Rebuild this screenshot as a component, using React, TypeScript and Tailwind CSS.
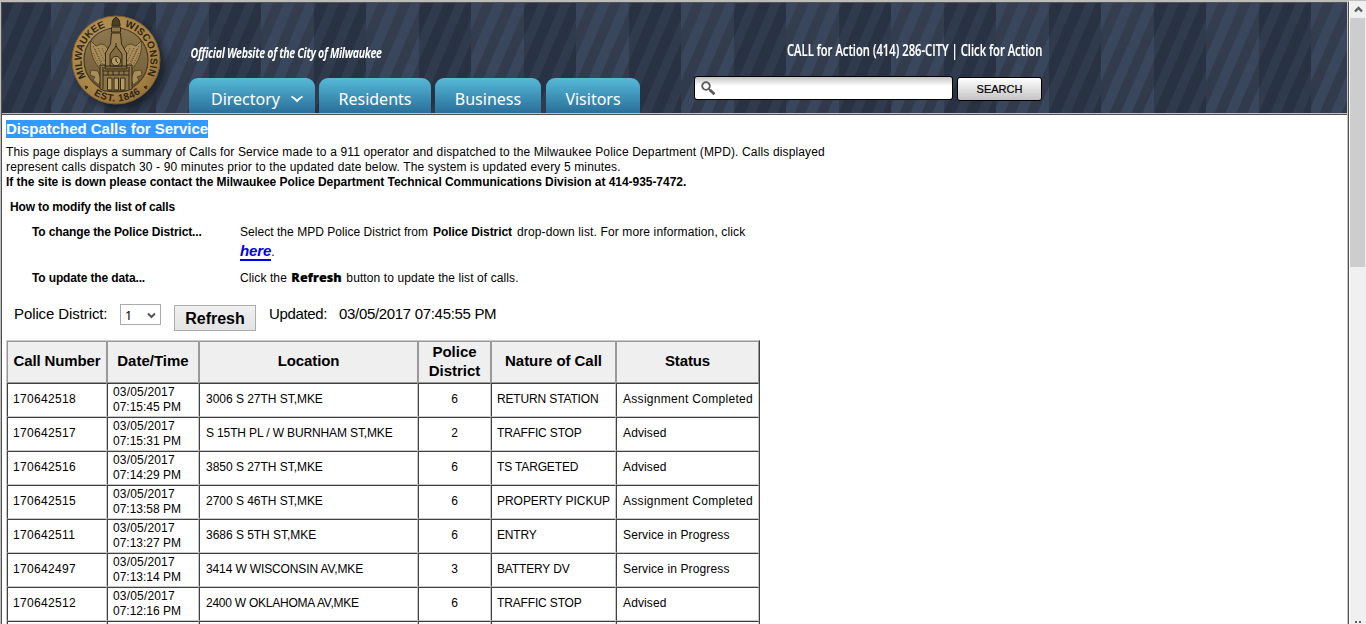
import React from "react";

const calls = [
  ["170642518", "07:15:45 PM", "3006 S 27TH ST,MKE", "6", "RETURN STATION", "Assignment Completed"],
  ["170642517", "07:15:31 PM", "S 15TH PL / W BURNHAM ST,MKE", "2", "TRAFFIC STOP", "Advised"],
  ["170642516", "07:14:29 PM", "3850 S 27TH ST,MKE", "6", "TS TARGETED", "Advised"],
  ["170642515", "07:13:58 PM", "2700 S 46TH ST,MKE", "6", "PROPERTY PICKUP", "Assignment Completed"],
  ["170642511", "07:13:27 PM", "3686 S 5TH ST,MKE", "6", "ENTRY", "Service in Progress"],
  ["170642497", "07:13:14 PM", "3414 W WISCONSIN AV,MKE", "3", "BATTERY DV", "Service in Progress"],
  ["170642512", "07:12:16 PM", "2400 W OKLAHOMA AV,MKE", "6", "TRAFFIC STOP", "Advised"],
];

function Stripes() {
  return (
    <svg className="absolute inset-0 h-full w-full" aria-hidden="true">
      <defs>
        <linearGradient id="shade" x1="0" y1="0" x2="0" y2="1">
          <stop offset="0" stopColor="#343e4e" />
          <stop offset="1" stopColor="#303a4b" />
        </linearGradient>
        <pattern id="bands" x="49" y="0" width="105" height="110" patternUnits="userSpaceOnUse">
          <rect width="105" height="110" fill="url(#shade)" />
          {[1, 23, 45, 67, 89].map((x) => (
            <path key={x} d={`M${x} 0h11l-47.5 110h-11z`} fill="#3a465b" />
          ))}
          <rect x="53" width="52" height="110" fill="#293242" />
          <svg x="53" width="52" height="110" overflow="hidden">
            {[-7, 15, 37, 59, 81].map((x) => (
              <path key={x} d={`M${x} 0h10l-47.5 110h-10z`} fill="#303b4e" />
            ))}
          </svg>
        </pattern>
      </defs>
      <rect width="100%" height="100%" fill="url(#bands)" />
    </svg>
  );
}

function Seal() {
  return (
    <svg width="104" height="100" viewBox="0 0 104 100" className="block overflow-visible">
      <defs>
        <radialGradient id="gold" cx="0.4" cy="0.35" r="0.75">
          <stop offset="0" stopColor="#b79659" />
          <stop offset="0.7" stopColor="#a88345" />
          <stop offset="1" stopColor="#8c6933" />
        </radialGradient>
        <linearGradient id="field" x1="0" y1="0" x2="0" y2="1">
          <stop offset="0" stopColor="#8d774f" />
          <stop offset="1" stopColor="#6f5b36" />
        </linearGradient>
        <filter id="soft" x="-20%" y="-20%" width="150%" height="150%">
          <feGaussianBlur stdDeviation="3" />
        </filter>
        <path id="ringTop" d="M22.4 67.8A34.5 34.5 0 1 1 81.6 67.8" />
        <path id="ringBottom" d="M12.7 62.8A41.3 41.3 0 0 0 91.300 62.8" />
      </defs>
      <circle cx="57" cy="55" r="44" fill="#161c28" opacity="0.8" filter="url(#soft)" />
      <circle cx="52" cy="50" r="44" fill="url(#gold)" stroke="#7c6135" strokeWidth="1" />
      <circle cx="52" cy="50" r="32" fill="url(#field)" stroke="#4a3c25" strokeWidth="1.2" />
      <g fontFamily="Liberation Sans, sans-serif" fontWeight="bold" fill="#2c2618" fontSize="10">
        <text>
          <textPath href="#ringTop" startOffset="1" textLength="61">MILWAUKEE</textPath>
        </text>
        <text>
          <textPath href="#ringTop" startOffset="81" textLength="61">WISCONSIN</textPath>
        </text>
        <text>
          <textPath href="#ringBottom" startOffset="28" textLength="50">EST. 1846</textPath>
        </text>
      </g>
      <g fill="#a98d59" stroke="#493a22" strokeWidth="0.8">
        <path d="M27 31l5 5 5-2 4 1 3 4v16l-6 6c-8-8-13-19-11-30z" />
        <path d="M77 31l-5 5-5-2-4 1-3 4v16l6 6c8-8 13-19 11-30z" />
        <path d="M27 60l7 1 3 8-2 6-6-5 2-3-5-2z" />
        <path d="M77 60l-7 1-3 8 2 6 6-5-2-3 5-2z" />
      </g>
      <g stroke="#5f4b2b" strokeWidth="0.9" strokeDasharray="1.4 1.2" fill="none">
        <path d="M29 36l9 20M31 39l8 16M29 43l7 14M34 38l7 14M38 38l4 10M75 36l-9 20M73 39l-8 16M75 43l-7 14M70 38l-7 14M66 38l-4 10" />
      </g>
      <g stroke="#30281a" strokeWidth="1">
        <path d="M48 14q0-5 4-7q4 2 4 7v2h-8z" fill="#4b3e27" />
        <path d="M47.500 17h9v5h-9z" fill="#8f7646" />
        <path d="M47.500 23h9l1 11 5 9v13h-21V43l5-9z" fill="#9a804f" />
        <path d="M46 56V44l6-8 6 8v12z" fill="#836b40" />
        <circle cx="52" cy="51" r="4.700" fill="#b59a62" />
        <path d="M52 48v3l2 2" fill="none" />
        <path d="M36 55h5v4h22v-4h5v24l-6 2H41l-5-2z" fill="#8e7546" />
        <path d="M39 61h26M39 65h26M44 61v4M49 61v4M55 61v4M60 61v4" fill="none" />
        <path d="M43.500 68h4.500v12h-4.500zM50 68h4.500v12H50zM56.500 68h4.500v12h-4.500z" fill="#b89b60" />
        <path d="M39 57v22M65 57v22M52 36v-3" fill="none" />
      </g>
      <path d="M21 76l3 1-2 2zM83 76l-3 1 2 2z" fill="#3b301e" stroke="#3b301e" />
    </svg>
  );
}

function Tab({ className, children }: { className: string; children: React.ReactNode }) {
  return (
    <a className={"flex h-[35px] items-center justify-center rounded-t-[9px] bg-linear-to-b from-[#56bad8] to-[#2a6f9a] pt-[7px] font-['Noto_Sans',sans-serif] text-[16px] text-white " + className}>
      {children}
    </a>
  );
}

function Header() {
  return (
    <header className="relative h-[112px] border-t border-b border-t-[#555] border-b-[#bfc0c6]">
      <Stripes />
      <div className="relative flex h-[110px]">
        <div className="w-[187px] pt-[7px] pl-[62px]">
          <Seal />
        </div>
        <div className="flex w-[505px] flex-col justify-between pt-[38px]">
          <div className="h-[20px] w-[193px] whitespace-nowrap">
            <span className="inline-block origin-left scale-x-[0.755] pl-[2px] font-['Open_Sans',sans-serif] text-[14px] leading-[20px] font-bold tracking-[-0.4px] text-white italic">
              Official Website of the City of Milwaukee
            </span>
          </div>
          <nav className="flex">
            <Tab className="mr-[4px] w-[126px] gap-[10px] pl-[11px]">
              Directory
              <svg width="14" height="8" viewBox="0 0 14 8">
                <path d="M1.500 1.500Q5 3.500 7 6Q9 3.500 12.500 1.500" fill="none" stroke="#fff" strokeWidth="2" />
              </svg>
            </Tab>
            <Tab className="mr-[4px] w-[112px]">Residents</Tab>
            <Tab className="mr-[5px] w-[106px]">Business</Tab>
            <Tab className="w-[94px]">Visitors</Tab>
          </nav>
        </div>
        <div className="w-[348px] pt-[36px]">
          <div className="ml-[93px] h-[22px] w-[256px] whitespace-nowrap">
            <span className="inline-block origin-left scale-x-[0.725] font-['Open_Sans',sans-serif] text-[15.500px] leading-[20px] font-semibold text-white [-webkit-text-stroke:0.2px_#fff]">
              CALL for Action (414) 286-CITY | Click for Action
            </span>
          </div>
          <div className="mt-[15px] flex">
            <div className="flex h-[24px] w-[259px] items-start rounded-[3px] border border-black bg-linear-to-b from-[#c4c4c4] via-white via-40% to-white pt-[4px] pl-[6px]">
              <svg width="15" height="15" viewBox="0 0 15 15" fill="none" stroke="#5a5a5a">
                <circle cx="5" cy="5" r="3.800" strokeWidth="1.800" />
                <path d="M7.800 8L9.500 9.500" strokeWidth="1.800" />
                <path d="M9 9L13.500 13.300" strokeWidth="2.800" />
              </svg>
            </div>
            <button className="mt-px ml-[4px] h-[24px] w-[85px] rounded-[3px] border border-black bg-linear-to-b from-white to-[#c4c4c4] text-[11px] leading-[22px] text-black [-webkit-text-stroke:0.2px_#000]">
              SEARCH
            </button>
          </div>
        </div>
      </div>
    </header>
  );
}

function Help() {
  return (
    <section className="pl-[4px] text-[12px] leading-[15px]">
      <h1 className="mt-[5px] h-[18px] w-[202px] bg-[#3399ff] text-[15px] leading-[18px] font-bold tracking-[-0.02px] whitespace-nowrap text-white">
        Dispatched Calls for Service
      </h1>
      <p className="mt-[7px] whitespace-nowrap">
        <span className="tracking-[0.138px]">This page displays a summary of Calls for Service made to a 911 operator and dispatched to the Milwaukee Police Department (MPD). Calls displayed</span>
        <br />
        <span className="tracking-[0.142px]">represent calls dispatch 30 - 90 minutes prior to the updated date below. The system is updated every 5 minutes.</span>
        <br />
        <b className="tracking-[-0.038px]">If the site is down please contact the Milwaukee Police Department Technical Communications Division at 414-935-7472.</b>
      </p>
      <h2 className="mt-[10px] ml-[4px] font-bold tracking-[-0.14px]">How to modify the list of calls</h2>
      <div className="mt-[10px] grid grid-cols-[208px_1fr] pl-[26px]">
        <b className="tracking-[-0.13px]">To change the Police District...</b>
        <div className="h-[46px]">
          <p className="tracking-[0.13px]">
            <span className="tracking-[0.04px]">Select the MPD Police District from </span>
            <b className="ml-[1.5px] tracking-[-0.07px]">Police District</b>
            <span className="ml-[5px]">drop-down list. For more information, click</span>
          </p>
          <p className="mt-[2px] leading-[20px]">
            <a className="border-b-2 border-[#0000ee] text-[15px] leading-[16px] font-bold tracking-[-0.1px] text-[#0000ee] italic">here</a>.
          </p>
        </div>
        <b className="tracking-[-0.13px]">To update the data...</b>
        <p className="tracking-[0.1px]">
          Click the{" "}
          <b className="ml-px inline-block w-[55px] font-['Open_Sans',sans-serif] text-[12.500px] leading-[13px] font-extrabold tracking-[0.1px] [-webkit-text-stroke:0.2px_#000]">Refresh</b>
          button to update the list of calls.
        </p>
      </div>
    </section>
  );
}

function Controls() {
  return (
    <div className="mt-[18px] flex h-[36px] items-start pl-[12px] text-[15px] leading-[20px]">
      <span className="w-[106px] tracking-[-0.1px] whitespace-nowrap">Police District:</span>
      <div className="flex h-[21px] w-[41px] items-center justify-between border border-[#a9a9b0] pt-[2px] pr-[4px] pl-[4px] font-['Noto_Sans',sans-serif] text-[12.500px]">
        1
        <svg width="9" height="7" viewBox="0 0 9 7">
          <path d="M1 1.500L4.500 5L8 1.500" fill="none" stroke="#555" strokeWidth="2" />
        </svg>
      </div>
      <button className="mt-px ml-[13px] h-[26px] w-[82px] border border-[#adadad] bg-linear-to-b from-[#f0f0f0] to-[#e3e3e3] pt-px text-[16px] leading-[24px] font-bold">
        Refresh
      </button>
      <span className="ml-[13px] w-[70px] tracking-[-0.35px]">Updated:</span>
      <span className="tracking-[-0.32px]">03/05/2017 07:45:55 PM</span>
    </div>
  );
}

const locationTracking = (text: string) =>
  text.includes("OKLAHOMA") ? "tracking-[-0.24px]" : text.length > 20 ? "tracking-[-0.13px]" : "tracking-[-0.03px]";

const statusTracking = (text: string) => (text === "Assignment Completed" ? "tracking-[0.3px]" : "tracking-[0.13px]");

function CallTable() {
  const head = "h-[42px] border border-[#999] bg-[#efefef] p-0 text-center font-bold";
  const cell = "h-[34px] border border-t-[#404040] border-l-[#404040] border-r-[#c8c8c8] border-b-[#c8c8c8] py-0 pr-0 whitespace-nowrap";
  return (
    <table className="ml-[4px] w-[754px] table-fixed border-separate border-spacing-0 border-t border-r border-l border-t-[#c8c8c8] border-r-[#404040] border-l-[#c8c8c8]">
      <colgroup>
        <col className="w-[100px]" />
        <col className="w-[92px]" />
        <col className="w-[219px]" />
        <col className="w-[73px]" />
        <col className="w-[125px]" />
        <col className="w-[143px]" />
      </colgroup>
      <thead className="text-[15px] leading-[19px]">
        <tr>
          <th className={head}><span className="relative -top-[2px] tracking-[-0.13px]">Call Number</span></th>
          <th className={head}><span className="relative -top-[2px]">Date/Time</span></th>
          <th className={head}><span className="relative -top-[2px] tracking-[-0.1px]">Location</span></th>
          <th className={head}><span className="relative -top-px">Police District</span></th>
          <th className={head}><span className="relative -top-[2px] tracking-[-0.05px]">Nature of Call</span></th>
          <th className={head}><span className="relative -top-[2px] tracking-[-0.15px]">Status</span></th>
        </tr>
      </thead>
      <tbody className="text-[12px] leading-[15px]">
        {calls.map(([id, time, location, district, nature, status]) => (
          <tr key={id}>
            <td className={cell + " pb-[2px] pl-[5px] tracking-[0.33px]"}>{id}</td>
            <td className={cell + " pl-[5px]"}>
              <span className="tracking-[0.17px]">03/05/2017</span>
              <br />
              {time}
            </td>
            <td className={cell + " pb-[2px] pl-[6px] " + locationTracking(location)}>{location}</td>
            <td className={cell + " pb-[2px] text-center"}>{district}</td>
            <td className={cell + " pb-[2px] pl-[5px] " + (nature === "PROPERTY PICKUP" ? "tracking-[-0.04px]" : "tracking-[-0.15px]")}>{nature}</td>
            <td className={cell + " pb-[2px] pl-[6px] " + statusTracking(status)}>{status}</td>
          </tr>
        ))}
        <tr>
          {[0, 1, 2, 3, 4, 5].map((i) => (
            <td key={i} className={cell} />
          ))}
        </tr>
      </tbody>
    </table>
  );
}

export default function App() {
  return (
    <div className="flex h-[624px] w-[1366px] overflow-hidden bg-white font-['Liberation_Sans',Arial,sans-serif] text-black">
      <div className="flex h-full w-[1349px] flex-col border-t-2 border-[#bdbdbd]">
        <div className="h-[622px] overflow-hidden border-r border-l border-l-[#bdbdbd] border-r-[#505050]">
          <div className="h-full border-r border-l border-l-[#505050] border-r-[#c6c6c6]">
            <Header />
            <main className="border-t border-[#505050]">
              <Help />
              <Controls />
              <CallTable />
            </main>
          </div>
        </div>
      </div>
      <aside className="h-full w-[17px] border-t border-[#bdbdbd] pl-px">
        <div className="flex h-full flex-col items-center bg-[#f0f0f0]">
          <div className="flex h-[17px] items-center">
            <svg width="9" height="7" viewBox="0 0 9 7">
              <path d="M1 5.500L4.500 2L8 5.500" fill="none" stroke="#606060" strokeWidth="2.400" />
            </svg>
          </div>
          <div className="h-[249px] w-[15px] self-start bg-[#cdcdcd]" />
          <div className="mt-auto flex h-[3px] w-[16px] items-start justify-center">
            <div className="h-[2px] w-[6px] border-r-2 border-l-2 border-[#606060]" />
          </div>
        </div>
      </aside>
    </div>
  );
}
